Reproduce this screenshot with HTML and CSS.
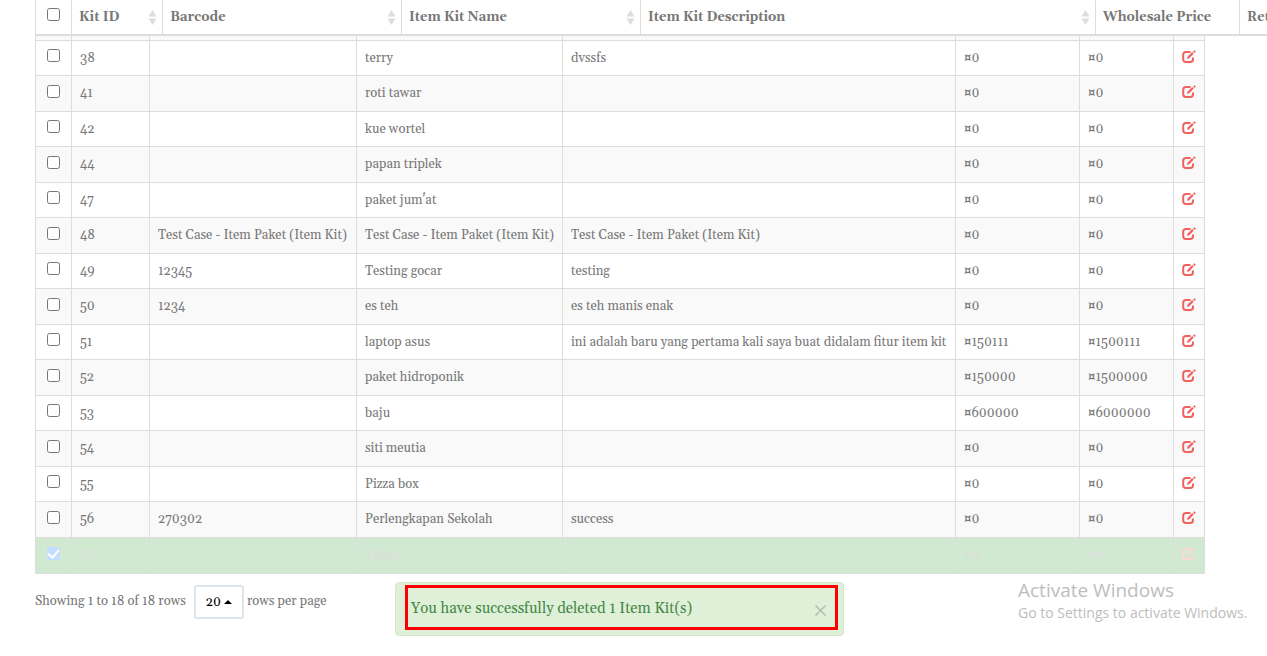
FILE: index.html
```html
<!DOCTYPE html>
<html lang="en">
<head>
<meta charset="utf-8">
<title>Item Kits</title>
<link rel="stylesheet" href="styles.css">
</head>
<body>
<svg class="sprite" aria-hidden="true">
  <symbol id="edit" viewBox="0 0 14 14">
    <path d="M8.500 2H4Q1.200 2 1.200 4.800V9.200Q1.200 12 4 12H8.200Q11 12 11 9.200V7.500" fill="none" stroke="currentColor" stroke-width="2"/>
    <path d="M5 9 5.600 6.600 10.200 2 11.800 3.600 7.200 8.200ZM11 1.300 12.200.2 13.900 1.700 12.600 2.900Z" fill="currentColor"/>
  </symbol>
  <symbol id="sort" viewBox="0 0 9 15">
    <path d="M4.500 0 8.500 6.500H.5ZM4.500 15 .5 8.500H8.500Z" fill="currentColor"/>
  </symbol>
</svg>
<main class="page">
  <div class="sticky-head">
    <table class="head-table">
      <colgroup><col class="h-check"><col class="h-id"><col class="h-name"><col class="h-name"><col class="h-desc"><col class="h-price"><col class="h-price"></colgroup>
      <thead><tr>
        <th><input type="checkbox" aria-label="Select all"></th>
        <th><div class="label">Kit ID <svg class="sort"><use href="#sort"/></svg></div></th>
        <th><div class="label">Barcode <svg class="sort"><use href="#sort"/></svg></div></th>
        <th><div class="label">Item Kit Name <svg class="sort"><use href="#sort"/></svg></div></th>
        <th><div class="label">Item Kit Description <svg class="sort"><use href="#sort"/></svg></div></th>
        <th><div class="label">Wholesale Price</div></th>
        <th><div class="label">Retail Price</div></th>
      </tr></thead>
    </table>
  </div>
  <div class="table-wrap">
    <table class="kits">
      <colgroup><col class="c-check"><col class="c-id"><col class="c-barcode"><col class="c-name"><col><col class="c-cost"><col class="c-retail"><col class="c-edit"></colgroup>
      <tbody>
        <tr class="scrolled"><td></td><td></td><td></td><td></td><td></td><td></td><td></td><td></td></tr>
        <tr><td><input type="checkbox" aria-label="Select 38"></td><td>38</td><td></td><td>terry</td><td>dvssfs</td><td>¤0</td><td>¤0</td><td><a href="#" class="edit" aria-label="Edit"><svg><use href="#edit"/></svg></a></td></tr>
        <tr><td><input type="checkbox" aria-label="Select 41"></td><td>41</td><td></td><td>roti tawar</td><td></td><td>¤0</td><td>¤0</td><td><a href="#" class="edit" aria-label="Edit"><svg><use href="#edit"/></svg></a></td></tr>
        <tr><td><input type="checkbox" aria-label="Select 42"></td><td>42</td><td></td><td>kue wortel</td><td></td><td>¤0</td><td>¤0</td><td><a href="#" class="edit" aria-label="Edit"><svg><use href="#edit"/></svg></a></td></tr>
        <tr><td><input type="checkbox" aria-label="Select 44"></td><td>44</td><td></td><td>papan triplek</td><td></td><td>¤0</td><td>¤0</td><td><a href="#" class="edit" aria-label="Edit"><svg><use href="#edit"/></svg></a></td></tr>
        <tr><td><input type="checkbox" aria-label="Select 47"></td><td>47</td><td></td><td>paket jum'at</td><td></td><td>¤0</td><td>¤0</td><td><a href="#" class="edit" aria-label="Edit"><svg><use href="#edit"/></svg></a></td></tr>
        <tr><td><input type="checkbox" aria-label="Select 48"></td><td>48</td><td>Test Case - Item Paket (Item Kit)</td><td>Test Case - Item Paket (Item Kit)</td><td>Test Case - Item Paket (Item Kit)</td><td>¤0</td><td>¤0</td><td><a href="#" class="edit" aria-label="Edit"><svg><use href="#edit"/></svg></a></td></tr>
        <tr><td><input type="checkbox" aria-label="Select 49"></td><td>49</td><td>12345</td><td>Testing gocar</td><td>testing</td><td>¤0</td><td>¤0</td><td><a href="#" class="edit" aria-label="Edit"><svg><use href="#edit"/></svg></a></td></tr>
        <tr><td><input type="checkbox" aria-label="Select 50"></td><td>50</td><td>1234</td><td>es teh</td><td>es teh manis enak</td><td>¤0</td><td>¤0</td><td><a href="#" class="edit" aria-label="Edit"><svg><use href="#edit"/></svg></a></td></tr>
        <tr><td><input type="checkbox" aria-label="Select 51"></td><td>51</td><td></td><td>laptop asus</td><td>ini adalah baru yang pertama kali saya buat didalam fitur item kit</td><td>¤150111</td><td>¤1500111</td><td><a href="#" class="edit" aria-label="Edit"><svg><use href="#edit"/></svg></a></td></tr>
        <tr><td><input type="checkbox" aria-label="Select 52"></td><td>52</td><td></td><td>paket hidroponik</td><td></td><td>¤150000</td><td>¤1500000</td><td><a href="#" class="edit" aria-label="Edit"><svg><use href="#edit"/></svg></a></td></tr>
        <tr><td><input type="checkbox" aria-label="Select 53"></td><td>53</td><td></td><td>baju</td><td></td><td>¤600000</td><td>¤6000000</td><td><a href="#" class="edit" aria-label="Edit"><svg><use href="#edit"/></svg></a></td></tr>
        <tr><td><input type="checkbox" aria-label="Select 54"></td><td>54</td><td></td><td>siti meutia</td><td></td><td>¤0</td><td>¤0</td><td><a href="#" class="edit" aria-label="Edit"><svg><use href="#edit"/></svg></a></td></tr>
        <tr><td><input type="checkbox" aria-label="Select 55"></td><td>55</td><td></td><td>Pizza box</td><td></td><td>¤0</td><td>¤0</td><td><a href="#" class="edit" aria-label="Edit"><svg><use href="#edit"/></svg></a></td></tr>
        <tr><td><input type="checkbox" aria-label="Select 56"></td><td>56</td><td>270302</td><td>Perlengkapan Sekolah</td><td>success</td><td>¤0</td><td>¤0</td><td><a href="#" class="edit" aria-label="Edit"><svg><use href="#edit"/></svg></a></td></tr>
        <tr class="removed"><td><input type="checkbox" checked aria-label="Select 57"></td><td>57</td><td></td><td>Tablet</td><td></td><td>¤0</td><td>¤0</td><td><a href="#" class="edit" aria-label="Edit"><svg><use href="#edit"/></svg></a></td></tr>
      </tbody>
    </table>
    <div class="pager">
      <span>Showing 1 to 18 of 18 rows</span>
      <button type="button" class="page-size">20 <span class="caret"></span></button>
      <span>rows per page</span>
    </div>
  </div>
  <div class="alert" role="alert">
    <div class="alert-frame">
      <span>You have successfully deleted 1 Item Kit(s)</span>
      <button type="button" class="close" aria-label="Close"><svg viewBox="0 0 11 11"><path d="M.5.5 10.500 10.500M10.500.5.5 10.500" stroke="currentColor" stroke-width="1.500"/></svg></button>
    </div>
  </div>
  <div class="watermark">
    <div class="watermark-title">Activate Windows</div>
    <div>Go to Settings to activate Windows.</div>
  </div>
</main>
</body>
</html>
```

FILE: styles.css
```css
* { box-sizing: border-box; }

body {
  margin: 0;
  background: #fff;
  color: #777;
  font: 13px/20px Gelasio, Georgia, "Liberation Serif", serif;
}

.sprite { position: absolute; width: 0; height: 0; }

.page {
  position: relative;
  min-height: 100vh;
  overflow: hidden;
}

table {
  border-collapse: collapse;
  table-layout: fixed;
}

input[type="checkbox"] {
  display: block;
  width: 13px;
  height: 13px;
  margin: 0 auto;
}

/* Header row */
.sticky-head { padding-left: 35px; overflow: hidden; }
.head-table { width: 1349px; }
.h-check { width: 36px; }
.h-id { width: 91px; }
.h-name { width: 239px; }
.h-desc { width: 455px; }
.h-price { width: 144px; }

th {
  height: 35px;
  padding: 0 7px;
  border: 1px solid #ddd;
  border-top: 0;
  border-bottom: 2px solid #ddd;
  text-align: left;
  vertical-align: top;
}
th input[type="checkbox"] { margin-top: 8px; }
.label {
  display: flex;
  justify-content: space-between;
  padding-top: 7px;
  white-space: nowrap;
}
.sort { width: 9px; height: 15px; margin: 3px -2px 0 0; color: #ddd; }

/* Body rows */
.table-wrap { padding: 0 62px 0 35px; }
.kits { width: 100%; }
.c-check { width: 36px; }
.c-id { width: 78px; }
.c-barcode { width: 207px; }
.c-name { width: 206px; }
.c-cost { width: 124px; }
.c-retail { width: 94px; }
.c-edit { width: 31px; }

td {
  height: 35px;
  padding: 0 8px;
  border: 1px solid #ddd;
  vertical-align: middle;
  white-space: nowrap;
}
tr:nth-child(odd) td { height: 36px; background: #f9f9f9; }
tr:nth-child(even) td { background: #fff; }
.kits .scrolled td { height: 4px; border-top: 0; }
td input[type="checkbox"] { margin-bottom: 4px; }
.kits td:last-child { padding: 0 0 2px; }
.kits .scrolled td:last-child { padding: 0; }
.edit { display: block; width: 14px; height: 14px; margin: 0 auto; color: #f0625f; }
.edit svg { display: block; width: 14px; height: 14px; }

.kits .removed td { height: 36px; background: #d0e9d0; color: #ddd; }
.removed .edit { color: #fad8d6; }
.removed input[type="checkbox"] {
  display: grid;
  place-items: center;
  appearance: none;
  border-radius: 2px;
  background: #c2ddff;
}
.removed input::before {
  content: "";
  width: 5px;
  height: 9px;
  margin-bottom: 2px;
  border: solid #fff;
  border-width: 0 2px 2px 0;
  transform: rotate(40deg);
}

/* Pager */
.pager { display: flex; align-items: flex-start; padding-top: 11px; }
.pager > span { padding-top: 6px; }
.page-size {
  display: flex;
  align-items: center;
  justify-content: center;
  gap: 3px;
  width: 50px;
  height: 34px;
  margin: 0 3px 0 8px;
  padding: 0;
  border: 2px solid #dce4ec;
  border-radius: 3px;
  background: #fff;
  color: #000;
  font: inherit;
}
.caret {
  border: 4px solid transparent;
  border-top: 0;
  border-bottom-color: #000;
}

/* Notification */
.alert {
  position: absolute;
  left: 395px;
  top: 582px;
  width: 449px;
  padding: 2px 5px 5px 9px;
  border: 1px solid #d6e9c6;
  border-radius: 4px;
  background: #dff0d8;
  color: #468847;
  font-size: 15px;
}
.alert-frame {
  display: flex;
  align-items: center;
  justify-content: space-between;
  height: 45px;
  padding: 3px 9px 0 3px;
  border: 3px solid #f00;
}
.close {
  width: 11px;
  height: 11px;
  margin-top: 2px;
  padding: 0;
  border: 0;
  background: none;
  color: #b0bdab;
}
.close svg { display: block; width: 11px; height: 11px; }

.watermark {
  position: absolute;
  left: 1018px;
  top: 578px;
  color: #bdbdbd;
  font: 14px/20px "Open Sans", "Noto Sans", sans-serif;
  white-space: nowrap;
}
.watermark-title { font-size: 19px; line-height: 25px; }
```
